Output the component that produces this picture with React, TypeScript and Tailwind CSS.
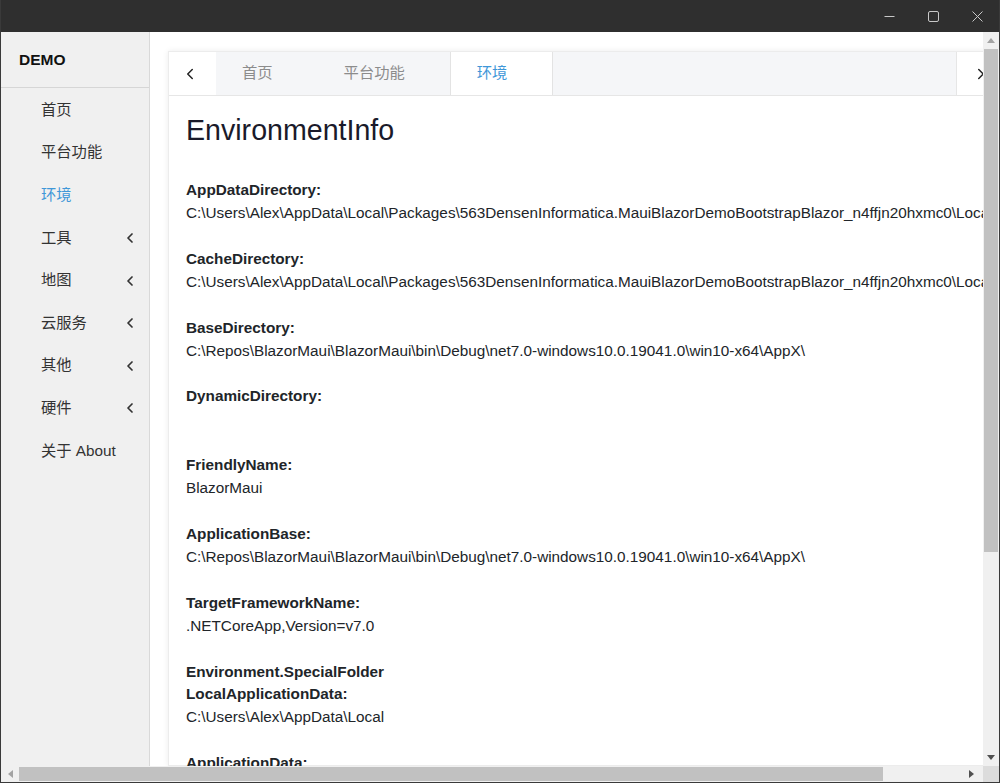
import { ChevronLeft, ChevronRight } from 'lucide-react';

const menu = [
  { label: '首页' },
  { label: '平台功能' },
  { label: '环境', active: true },
  { label: '工具', sub: true },
  { label: '地图', sub: true },
  { label: '云服务', sub: true },
  { label: '其他', sub: true },
  { label: '硬件', sub: true },
  { label: '关于 About' },
];

const tabs = [
  { label: '首页' },
  { label: '平台功能' },
  { label: '环境', active: true },
];

const pkg =
  'C:\\Users\\Alex\\AppData\\Local\\Packages\\563DensenInformatica.MauiBlazorDemoBootstrapBlazor_n4ffjn20hxmc0\\';
const appx = 'C:\\Repos\\BlazorMaui\\BlazorMaui\\bin\\Debug\\net7.0-windows10.0.19041.0\\win10-x64\\AppX\\';

const rows: { label: string[]; value: string }[] = [
  { label: ['AppDataDirectory:'], value: pkg + 'LocalState' },
  { label: ['CacheDirectory:'], value: pkg + 'LocalCache' },
  { label: ['BaseDirectory:'], value: appx },
  { label: ['DynamicDirectory:'], value: '' },
  { label: ['FriendlyName:'], value: 'BlazorMaui' },
  { label: ['ApplicationBase:'], value: appx },
  { label: ['TargetFrameworkName:'], value: '.NETCoreApp,Version=v7.0' },
  { label: ['Environment.SpecialFolder', 'LocalApplicationData:'], value: 'C:\\Users\\Alex\\AppData\\Local' },
  { label: ['ApplicationData:'], value: 'C:\\Users\\Alex\\AppData\\Roaming' },
];

function TitleBar() {
  return (
    <div className="h-[32px] shrink-0 bg-[#2f2f2f] flex justify-end items-center text-[#c8c8c8]">
      <div className="w-[44px] h-full flex items-center justify-center">
        <svg width="11" height="11" viewBox="0 0 11 11">
          <path d="M0.5 5.5h10" stroke="currentColor" strokeWidth="1" />
        </svg>
      </div>
      <div className="w-[44px] h-full flex items-center justify-center">
        <svg width="11" height="11" viewBox="0 0 11 11">
          <rect x="0.5" y="0.5" width="10" height="10" rx="1.5" fill="none" stroke="currentColor" strokeWidth="1" />
        </svg>
      </div>
      <div className="w-[44px] h-full flex items-center justify-center">
        <svg width="11" height="11" viewBox="0 0 11 11">
          <path d="M0.5 0.5l10 10M10.5 0.5l-10 10" stroke="currentColor" strokeWidth="1" />
        </svg>
      </div>
    </div>
  );
}

function Sidebar() {
  return (
    <aside className="w-[149px] shrink-0 bg-[#f0f0f0] border-r border-[#d9d9d9] flex flex-col">
      <div className="h-[56px] shrink-0 border-b border-[#d6d6d6] flex items-center pl-[18px] text-[15.5px] font-bold text-[#111]">
        DEMO
      </div>
      <nav className="flex flex-col pt-[1px]">
        {menu.map((m) => (
          <div
            key={m.label}
            className={`h-[42.6px] flex items-center pl-[40px] pr-[11px] text-[15.3px] ${m.active ? 'text-[#3f97d8]' : 'text-[#333]'}`}
          >
            <span className="flex-1">{m.label}</span>
            {m.sub && <ChevronLeft className="w-[16px] h-[16px] text-[#333]" strokeWidth={2.6} />}
          </div>
        ))}
      </nav>
    </aside>
  );
}

function Card() {
  return (
    <div className="w-[838px] shrink-0 bg-white border border-[#ececec] shadow-[0_0_6px_rgba(0,0,0,0.08)] flex flex-col">
      {/* tab header */}
      <div className="h-[44px] shrink-0 flex bg-[#f5f6f8] border-b border-[#e6e6e6]">
        <div className="w-[47px] bg-white flex items-center justify-center pr-[5px] text-[#222]">
          <ChevronLeft className="w-[18px] h-[18px]" strokeWidth={2} />
        </div>
        {tabs.map((t) => (
          <div
            key={t.label}
            className={`h-full flex items-center pl-[26px] pr-[45px] text-[15.3px] ${
              t.active ? 'bg-white text-[#3f97d8] border-x border-[#e3e3e3] h-[44px]' : 'text-[#8c8c8c]'
            }`}
          >
            {t.label}
          </div>
        ))}
        <div className="flex-1" />
        <div className="w-[49px] bg-white border-l border-[#e6e6e6] flex items-center justify-center text-[#222]">
          <ChevronRight className="w-[18px] h-[18px]" strokeWidth={2} />
        </div>
      </div>

      {/* body */}
      <div className="px-[17px] pt-[17px] text-[#212529]">
        <h1 className="text-[28.6px] leading-[35px] text-[#1a1a2a] mb-[31px]">EnvironmentInfo</h1>
        {rows.map((r) => (
          <div key={r.label.join()} className="mb-[23px] text-[15.3px] leading-[22.9px] whitespace-nowrap">
            {r.label.map((l) => (
              <div key={l} className="font-bold">
                {l}
              </div>
            ))}
            <div className="h-[22.9px]">{r.value}</div>
          </div>
        ))}
      </div>
    </div>
  );
}

function VScroll() {
  return (
    <div className="w-[16px] shrink-0 bg-[#f0f0f0] flex flex-col items-center">
      <div className="h-[17px] w-full flex items-center justify-center">
        <svg width="8" height="5" viewBox="0 0 8 5">
          <path d="M0 5L4 0L8 5Z" fill="#a3a3a3" />
        </svg>
      </div>
      <div className="h-[503px] w-[14px] bg-[#c1c1c1]" />
      <div className="flex-1" />
      <div className="h-[17px] w-full flex items-center justify-center">
        <svg width="8" height="5" viewBox="0 0 8 5">
          <path d="M0 0L4 5L8 0Z" fill="#505050" />
        </svg>
      </div>
    </div>
  );
}

function HScroll() {
  return (
    <div className="h-[16px] shrink-0 flex bg-[#f0f0f0]">
      <div className="w-[18px] flex items-center justify-center">
        <svg width="5" height="8" viewBox="0 0 5 8">
          <path d="M5 0L0 4L5 8Z" fill="#a3a3a3" />
        </svg>
      </div>
      <div className="w-[864px] h-[14px] mt-[1px] bg-[#c1c1c1]" />
      <div className="flex-1 flex items-center justify-end pr-[9px]">
        <svg width="5" height="8" viewBox="0 0 5 8">
          <path d="M0 0L5 4L0 8Z" fill="#505050" />
        </svg>
      </div>
      <div className="w-[16px] bg-[#dcdcdc]" />
    </div>
  );
}

export default function App() {
  return (
    <div className="w-[1000px] h-[783px] bg-[#2f2f2f] flex flex-col overflow-hidden border-x border-b border-[#3a3a3a] font-['Liberation_Sans','Noto_Sans_CJK_SC',sans-serif]">
      <TitleBar />
      <div className="flex-1 min-h-0 flex">
        <div className="flex-1 min-w-0 flex overflow-hidden bg-white">
          <Sidebar />
          <main className="flex-1 min-w-0 overflow-hidden pl-[18px] pt-[19px] flex">
            <Card />
          </main>
        </div>
        <VScroll />
      </div>
      <HScroll />
    </div>
  );
}
